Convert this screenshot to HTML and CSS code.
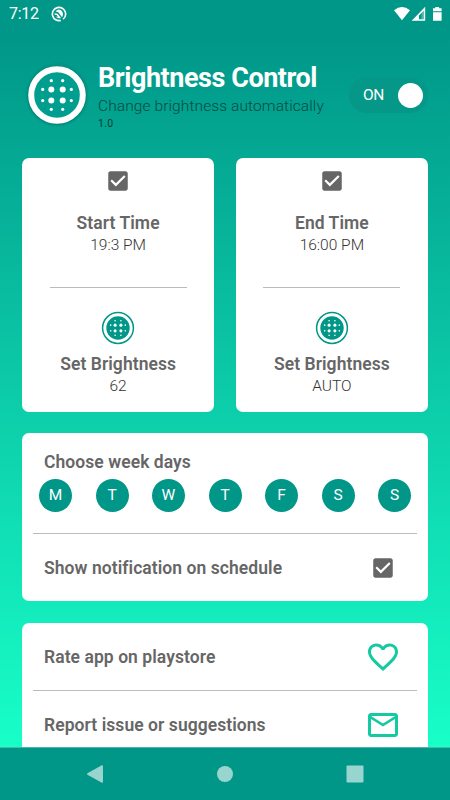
FILE: index.html
```html
<!DOCTYPE html>
<html lang="en">
<head>
    <meta charset="UTF-8">
    <meta name="viewport" content="width=device-width, initial-scale=1.0">
    <title>Brightness Control</title>
    <link rel="stylesheet" href="styles.css">
</head>
<body>
    <svg class="defs" width="0" height="0">
        <symbol id="dots" viewBox="-20 -20 40 40">
            <g fill="#fff">
                <circle cx="-5.7" cy="-5.6" r="3"/>
                <circle cx="5.7" cy="-5.6" r="3"/>
                <circle cx="-5.7" cy="5.6" r="3"/>
                <circle cx="5.7" cy="5.6" r="3"/>
                <circle cx="-5.7" cy="-14.3" r="1.6"/>
                <circle cx="5.7" cy="-14.3" r="1.6"/>
                <circle cx="-5.7" cy="14.3" r="1.6"/>
                <circle cx="5.7" cy="14.3" r="1.6"/>
                <circle cx="-14.3" cy="-5.6" r="1.6"/>
                <circle cx="14.3" cy="-5.6" r="1.6"/>
                <circle cx="-14.3" cy="5.6" r="1.6"/>
                <circle cx="14.3" cy="5.6" r="1.6"/>
            </g>
        </symbol>
        <symbol id="dial" viewBox="0 0 34 34">
            <circle cx="17" cy="17" r="15.4" fill="#fff" stroke="#009688" stroke-width="1.5"/>
            <circle cx="17" cy="17" r="11.7" fill="#009688"/>
            <use href="#dots" x="6.8" y="6.8" width="20.4" height="20.4"/>
        </symbol>
        <symbol id="check" viewBox="0 0 24 24">
            <path fill="#666" d="M19 3H5c-1.1 0-2 .9-2 2v14c0 1.1.9 2 2 2h14c1.1 0 2-.9 2-2V5c0-1.1-.9-2-2-2zm-9 14l-5-5 1.410-1.410L10 14.170l7.590-7.590L19 8l-9 9z"/>
        </symbol>
    </svg>

    <div class="screen">
        <div class="status">
            <span class="clock">7:12</span>
            <svg class="status-app" width="16" height="16" viewBox="0 0 16 16">
                <circle cx="8" cy="8" r="6.6" fill="none" stroke="#fff" stroke-width="1.6" stroke-dasharray="38.5 3" transform="rotate(75 8 8)"/>
                <path fill="#fff" d="M4.500 5.200Q8 1.800 11 5.200Q13 8.500 11 11.200L7.500 6.500z"/>
                <path fill="#fff" d="M3.600 7.200L6.600 7.800L10 12Q6.500 13 4.600 10.500L7 11L5.600 9L3.800 9z"/>
            </svg>
            <svg class="status-right" width="50" height="16" viewBox="0 0 50 16">
                <path fill="#fff" d="M0 4.200Q8 -2.200 16 4.200L8 14.300z"/>
                <path fill="#fff" fill-rule="evenodd" d="M31.200.8V14.700H17.600zM29.800 4.800L25 9.600V13.200H29.800z"/>
                <path fill="#fff" fill-opacity=".3" d="M29.800 4.800L27.500 7V13.200H29.800z"/>
                <path fill="#fff" d="M41.300 1.100h3.800v1.200h2.500v3H39v-3h2.300zM39 6.300h8.600v8.500H39z"/>
            </svg>
        </div>

        <header class="header">
            <svg class="logo" width="66" height="66" viewBox="0 0 66 66">
                <circle cx="33" cy="33" r="31.8" fill="#007f73" fill-opacity=".22"/>
                <circle cx="33" cy="33.5" r="29.8" fill="#00695f" fill-opacity=".35"/>
                <circle cx="33" cy="33" r="25.8" fill="#009e8e" stroke="#fff" stroke-width="6"/>
                <use href="#dots" x="13" y="13" width="40" height="40"/>
            </svg>
            <div class="titles">
                <h1>Brightness Control</h1>
                <p class="subtitle">Change brightness automatically</p>
                <p class="version">1.0</p>
            </div>
            <div class="switch">
                <span>ON</span>
                <i class="thumb"></i>
            </div>
        </header>

        <div class="times">
            <div class="card time">
                <svg class="tick" width="26" height="26"><use href="#check"/></svg>
                <h2>Start Time</h2>
                <p class="value">19:3 PM</p>
                <div class="line"></div>
                <svg class="dial" width="34" height="34"><use href="#dial"/></svg>
                <h2>Set Brightness</h2>
                <p class="value">62</p>
            </div>
            <div class="card time">
                <svg class="tick" width="26" height="26"><use href="#check"/></svg>
                <h2>End Time</h2>
                <p class="value">16:00 PM</p>
                <div class="line"></div>
                <svg class="dial" width="34" height="34"><use href="#dial"/></svg>
                <h2>Set Brightness</h2>
                <p class="value">AUTO</p>
            </div>
        </div>

        <div class="card week">
            <h2>Choose week days</h2>
            <div class="days">
                <span>M</span>
                <span>T</span>
                <span>W</span>
                <span>T</span>
                <span>F</span>
                <span>S</span>
                <span>S</span>
            </div>
            <div class="row notify">
                <h2>Show notification on schedule</h2>
                <svg width="26" height="26"><use href="#check"/></svg>
            </div>
        </div>

        <div class="card links">
            <div class="row">
                <h2>Rate app on playstore</h2>
                <svg width="36" height="36" viewBox="0 0 24 24"><path fill="#15c9a0" d="M16.500 3c-1.740 0-3.410.81-4.500 2.090C10.910 3.810 9.240 3 7.500 3 4.420 3 2 5.420 2 8.500c0 3.780 3.400 6.860 8.550 11.540L12 21.350l1.450-1.320C18.600 15.360 22 12.280 22 8.500 22 5.420 19.580 3 16.500 3zm-4.400 15.550l-.1.100-.1-.1C7.140 14.240 4 11.390 4 8.500 4 6.500 5.500 5 7.500 5c1.540 0 3.040.99 3.570 2.360h1.870C13.460 5.990 14.960 5 16.500 5c2 0 3.500 1.500 3.500 3.500 0 2.890-3.140 5.740-7.900 10.050z"/></svg>
            </div>
            <div class="row report">
                <h2>Report issue or suggestions</h2>
                <svg width="36" height="36" viewBox="0 0 24 24"><path fill="#15c9a0" d="M22 6c0-1.100-.9-2-2-2H4c-1.100 0-2 .9-2 2v12c0 1.100.9 2 2 2h16c1.100 0 2-.9 2-2V6zm-2 0l-8 5-8-5h16zm0 12H4V8l8 5 8-5v10z"/></svg>
            </div>
        </div>
    </div>

    <nav class="navbar">
        <svg width="18" height="20" viewBox="0 0 18 20"><path d="M16.200 2v16L1.800 10z" stroke-width="1.500" stroke-linejoin="round"/></svg>
        <svg width="18" height="20" viewBox="0 0 18 20"><circle cx="9" cy="10" r="8"/></svg>
        <svg width="18" height="20" viewBox="0 0 18 20"><rect x=".5" y="1.500" width="17" height="17" rx="1"/></svg>
    </nav>
</body>
</html>
```
FILE: styles.css
```css
* {
    box-sizing: border-box;
}
body {
    font-family: Roboto, "Liberation Sans", sans-serif;
    color: #666;
    margin: 0;
    height: 800px;
    display: flex;
    flex-direction: column;
    overflow: hidden;
}
h1, h2, p {
    margin: 0;
    white-space: nowrap;
}
h2 {
    font-size: 17.5px;
    line-height: 22px;
    font-weight: 600;
    letter-spacing: 0.06px;
}
.defs {
    position: absolute;
}
.screen {
    height: 747px;
    padding: 0 22px;
    overflow: hidden;
    background: linear-gradient(#009688 30px, #18ffc8);
}
.status {
    display: flex;
    align-items: center;
    height: 27px;
    margin: 0 -16px 0 -13px;
    color: #fff;
    font-size: 16px;
}
.clock {
    letter-spacing: -0.3px;
}
.status-app {
    margin-left: 12px;
}
.status-right {
    margin-left: auto;
}
.header {
    display: flex;
    align-items: flex-start;
    height: 131px;
    padding-top: 35px;
}
.logo {
    flex: none;
    margin-left: 2px;
}
.titles {
    flex: none;
    width: 259px;
    padding-left: 8px;
}
h1 {
    color: #fff;
    font-size: 27px;
    line-height: 32px;
    font-weight: 700;
    letter-spacing: -0.45px;
}
.subtitle {
    color: #054a42;
    font-size: 15.5px;
    line-height: 24px;
    font-weight: 300;
    letter-spacing: 0.1px;
}
.version {
    color: #033e37;
    font-size: 10.5px;
    line-height: 12px;
    letter-spacing: 0.3px;
}
.switch {
    display: flex;
    flex: none;
    align-items: center;
    justify-content: space-between;
    width: 79px;
    height: 36px;
    margin-top: 15px;
    padding: 0 5px 0 14px;
    border-radius: 18px;
    background: #059788;
    color: #fff;
    font-size: 15.5px;
    letter-spacing: -0.4px;
}
.thumb {
    width: 25px;
    height: 25px;
    border-radius: 50%;
    background: #fff;
}
.card {
    background: #fff;
    border-radius: 7px;
}
.times {
    display: grid;
    grid-template-columns: 1fr 1fr;
    gap: 21.5px;
}
.time {
    display: flex;
    flex-direction: column;
    align-items: center;
    height: 254px;
    padding-top: 10px;
}
.tick {
    margin-bottom: 18px;
}
.value {
    font-size: 15.5px;
    line-height: 22px;
    font-weight: 300;
    color: #333;
}
.line {
    width: 137px;
    height: 1px;
    margin: 31px 0 23px;
    background: #bbb;
}
.dial {
    margin-bottom: 8px;
}
.week {
    height: 168px;
    margin-top: 21px;
    padding: 18px 11px 0;
}
.week > h2 {
    padding-left: 11px;
}
.days {
    display: flex;
    justify-content: space-between;
    padding: 6px 6px 21px;
}
.days span {
    width: 33px;
    height: 33px;
    border-radius: 50%;
    background: #009688;
    color: #fff;
    font-size: 15.5px;
    line-height: 33px;
    text-align: center;
}
.row {
    display: flex;
    align-items: center;
    justify-content: space-between;
    height: 67px;
    padding: 0 16px 0 11px;
}
.notify {
    height: 69px;
    padding-right: 21px;
    border-top: 1px solid #bbb;
}
.links {
    height: 150px;
    margin-top: 22px;
    padding: 0 11px;
}
.report {
    height: 69px;
    border-top: 1px solid #bbb;
}
.navbar {
    display: flex;
    align-items: center;
    justify-content: center;
    gap: 112px;
    height: 53px;
    background: #009688;
    border-top: 1px solid #4db6ac;
}
.navbar svg {
    fill: #99d5cf;
    stroke: #99d5cf;
    stroke-width: 0;
}
```
